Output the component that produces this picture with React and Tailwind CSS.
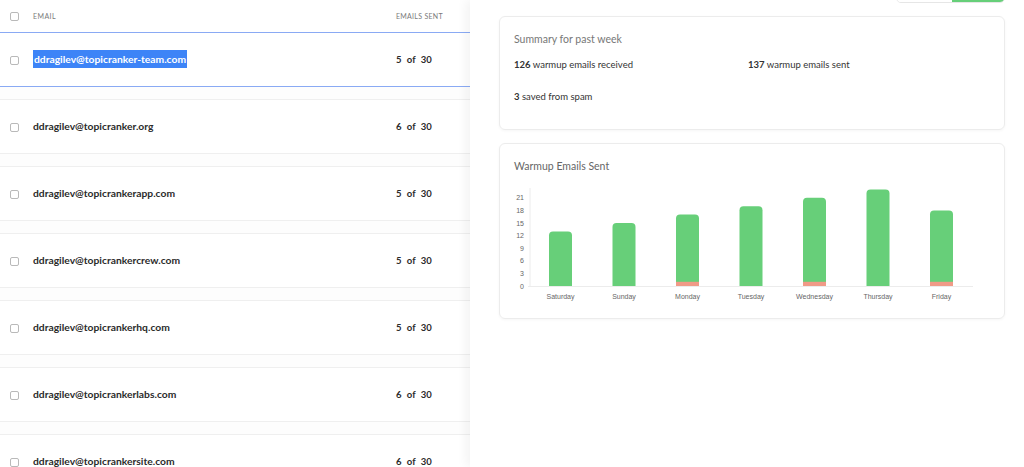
import React from "react";

const accounts = [
  { email: "ddragilev@topicranker-team.com", sent: 5, selected: true },
  { email: "ddragilev@topicranker.org", sent: 6 },
  { email: "ddragilev@topicrankerapp.com", sent: 5 },
  { email: "ddragilev@topicrankercrew.com", sent: 5 },
  { email: "ddragilev@topicrankerhq.com", sent: 5 },
  { email: "ddragilev@topicrankerlabs.com", sent: 6 },
  { email: "ddragilev@topicrankersite.com", sent: 6 },
];

const days = [
  { day: "Saturday", sent: 13, spam: 0 },
  { day: "Sunday", sent: 15, spam: 0 },
  { day: "Monday", sent: 17, spam: 1 },
  { day: "Tuesday", sent: 19, spam: 0 },
  { day: "Wednesday", sent: 21, spam: 1 },
  { day: "Thursday", sent: 23, spam: 0 },
  { day: "Friday", sent: 18, spam: 1 },
];

const Checkbox = () => (
  <span className="block w-[9px] h-[9px] rounded-[2px] border border-[#b9b9b9] bg-white shrink-0" />
);

const Chart = () => {
  const unit = 4.2;
  const base = 102;
  const barW = 23;
  const ticks = [0, 3, 6, 9, 12, 15, 18, 21];

  const barPath = (x, top, bottom, r) =>
    `M${x} ${bottom} L${x} ${top + r} Q${x} ${top} ${x + r} ${top} L${x + barW - r} ${top} Q${x + barW} ${top} ${x + barW} ${top + r} L${x + barW} ${bottom} Z`;

  return (
    <svg width="476" height="124" viewBox="0 0 476 124" className="block">
      {/* axes */}
      <line x1="16" y1="4" x2="16" y2={base} stroke="#ececec" strokeWidth="1" />
      <line x1="14" y1={base + 0.5} x2="459" y2={base + 0.5} stroke="#ececec" strokeWidth="1" />
      {ticks.map((t) => (
        <text
          key={t}
          x="10"
          y={base - t * unit + 2.5}
          textAnchor="end"
          fontSize="7"
          fill="#666666"
          fontFamily="'Liberation Sans', Arial, sans-serif"
        >
          {t}
        </text>
      ))}
      {days.map((d, i) => {
        const cx = 46.5 + i * 63.5;
        const x = cx - barW / 2;
        const top = base - d.sent * unit;
        return (
          <g key={d.day}>
            <path d={barPath(x, top, base, 4)} fill="#67cf79" />
            {d.spam > 0 && (
              <rect x={x} y={base - d.spam * unit} width={barW} height={d.spam * unit} fill="#f09a87" />
            )}
            <text
              x={cx}
              y="115"
              textAnchor="middle"
              fontSize="7"
              fill="#666666"
              fontFamily="'Liberation Sans', Arial, sans-serif"
            >
              {d.day}
            </text>
          </g>
        );
      })}
    </svg>
  );
};

export default function App() {
  return (
    <div
      className="flex h-[467px] w-[1024px] overflow-hidden bg-white text-[#2b2b2b]"
      style={{ fontFamily: "Lato, 'Open Sans', sans-serif" }}
    >
      {/* Accounts list */}
      <div className="w-[470px] shrink-0 bg-[#fdfdfd]">
        <div className="h-[33px] flex items-center bg-white border-b border-[#8aaaf4]">
          <div className="w-[33px] flex justify-center pr-[5px]">
            <Checkbox />
          </div>
          <span className="flex-1 text-[7px] tracking-[0.06em] uppercase text-[#7a7a7a]">Email</span>
          <span className="w-[74px] text-[7px] tracking-[0.04em] uppercase text-[#7a7a7a]">Emails Sent</span>
        </div>

        {accounts.map((a) => (
          <div
            key={a.email}
            className={`flex items-center bg-white mb-[12px] pt-[1px] ${
              a.selected ? "border-b border-[#8aaaf4] h-[54px]" : "h-[55px] border-y border-[#efefef]"
            }`}
          >
            <div className="w-[33px] flex justify-center pr-[5px]">
              <Checkbox />
            </div>
            <span className="flex-1 text-[10.3px] font-bold">
              <span className={a.selected ? "bg-[#3d84f7] text-white px-[1px] py-[3px]" : ""}>{a.email}</span>
            </span>
            <span className="w-[74px] text-[9.5px] font-bold tracking-[0.02em]">
              {a.sent}&nbsp; of&nbsp; 30
            </span>
          </div>
        ))}
      </div>

      {/* Warmup detail panel */}
      <div className="flex-1 bg-white pl-[29px] pr-[19px] shadow-[-4px_0_10px_rgba(0,0,0,0.05)] z-10">
        <div className="flex justify-end mt-[-27px] h-[30px]">
          <div className="flex h-full rounded-b-[5px] overflow-hidden border border-[#e6e6e6]">
            <div className="w-[55px] bg-white" />
            <div className="w-[52px] bg-[#66cf79]" />
          </div>
        </div>

        <div className="mt-[13px] h-[114px] rounded-[6px] border border-[#ececec] shadow-[0_1px_3px_rgba(0,0,0,0.04)] px-[14px] pt-[15px]">
          <div className="text-[10.5px] text-[#777]">Summary for past week</div>
          <div className="grid grid-cols-[234px_1fr] text-[9.5px] text-[#333] mt-[10px] gap-y-[18px]">
            <div>
              <span className="font-bold">126</span> warmup emails received
            </div>
            <div>
              <span className="font-bold">137</span> warmup emails sent
            </div>
            <div>
              <span className="font-bold">3</span> saved from spam
            </div>
          </div>
        </div>

        <div className="mt-[13px] h-[176px] rounded-[6px] border border-[#ececec] shadow-[0_1px_3px_rgba(0,0,0,0.04)] px-[14px] pt-[15px]">
          <div className="text-[10.5px] text-[#666]">Warmup Emails Sent</div>
          <div className="mt-[9px]">
            <Chart />
          </div>
        </div>
      </div>
    </div>
  );
}
